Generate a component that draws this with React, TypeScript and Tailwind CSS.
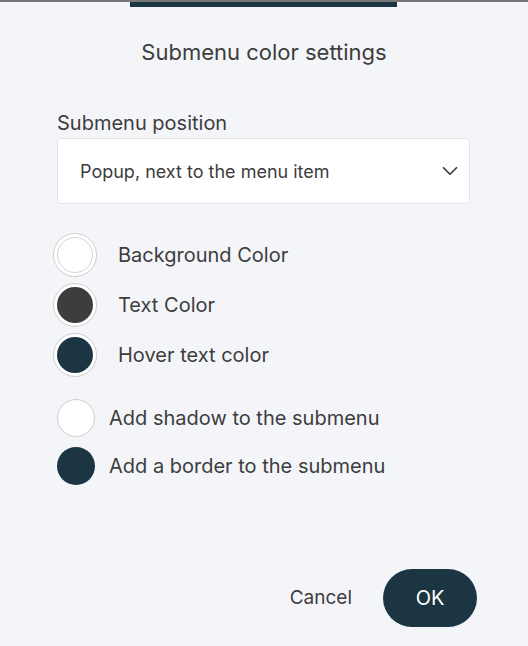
import { ChevronDown } from "lucide-react";

const colorRows = [
    { label: "Background Color", color: "bg-white border border-[#d4d4d4]" },
    { label: "Text Color", color: "bg-[#3d3d3d]" },
    { label: "Hover text color", color: "bg-[#1b3542]" },
];

const optionRows = [
    { label: "Add shadow to the submenu", color: "bg-white border border-[#d0d0d0]" },
    { label: "Add a border to the submenu", color: "bg-[#1b3542]" },
];

export default function App() {
    return (
        <div className="w-[528px] h-[646px] bg-[#f4f5f9] border-t-2 border-[#777777] flex flex-col text-[#3d3d3d] font-['Inter',sans-serif] overflow-hidden">
            {/* Top accent */}
            <div className="w-[267px] h-[5px] bg-[#1b3542] ml-[130px]" />

            {/* Title */}
            <h1 className="mt-[31px] text-center text-[22px] leading-[28px] font-normal">
                Submenu color settings
            </h1>

            <div className="px-[57px] mt-[45px] flex flex-col">
                <span className="text-[20px] leading-[24px]">Submenu position</span>
                <div className="mt-[3px] h-[66px] w-[413px] bg-white border border-[#e3e3e6] rounded-[4px] flex items-center justify-between pl-[22px] pr-[6px]">
                    <span className="text-[18px]">Popup, next to the menu item</span>
                    <ChevronDown className="w-[26px] h-[26px] text-[#3d3d3d]" strokeWidth={1.6} />
                </div>

                {/* Colors */}
                <div className="mt-[29px] -ml-[4px] flex flex-col gap-[6px]">
                    {colorRows.map(row => (
                        <div key={row.label} className="flex items-center gap-[21px]">
                            <div className="w-[44px] h-[44px] rounded-full bg-white border border-[#cfcfcf] flex items-center justify-center">
                                <div className={`w-[36px] h-[36px] rounded-full ${row.color}`} />
                            </div>
                            <span className="text-[20px] leading-[28px]">{row.label}</span>
                        </div>
                    ))}
                </div>

                {/* Options */}
                <div className="mt-[22px] flex flex-col gap-[10px]">
                    {optionRows.map(row => (
                        <div key={row.label} className="flex items-center gap-[14px]">
                            <div className={`w-[38px] h-[38px] rounded-full ${row.color}`} />
                            <span className="text-[20px] leading-[28px]">{row.label}</span>
                        </div>
                    ))}
                </div>
            </div>

            {/* Footer */}
            <div className="mt-auto mb-[19px] pr-[51px] flex items-center justify-end gap-[31px]">
                <button className="text-[19px] text-[#3d3d3d]">Cancel</button>
                <button className="w-[94px] h-[58px] rounded-full bg-[#1b3542] text-white text-[20px]">OK</button>
            </div>
        </div>
    );
}
